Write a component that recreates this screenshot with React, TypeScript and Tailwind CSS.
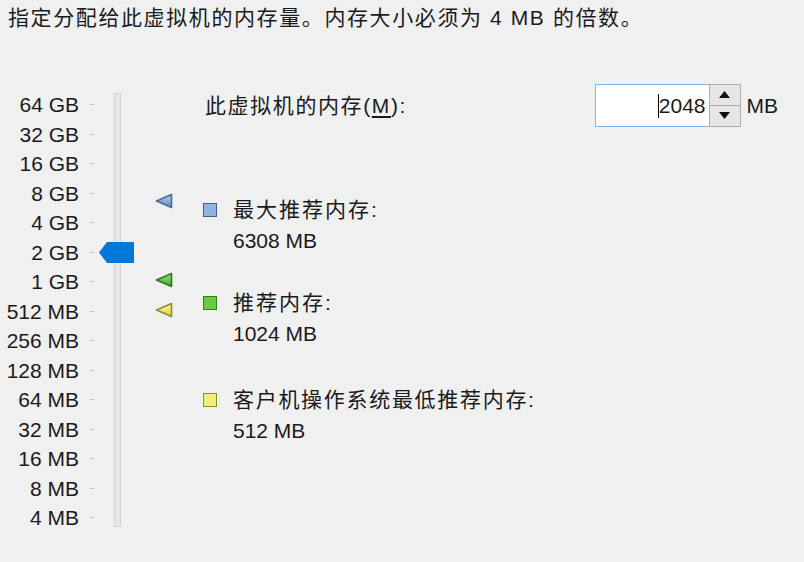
import React from "react";

const scale = [
  "64 GB", "32 GB", "16 GB", "8 GB", "4 GB", "2 GB", "1 GB",
  "512 MB", "256 MB", "128 MB", "64 MB", "32 MB", "16 MB", "8 MB", "4 MB",
];

function Marker({ id, light, dark, stroke, top }: { id: string; light: string; dark: string; stroke: string; top: number }) {
  return (
    <svg className="absolute left-[155px]" style={{ top }} width="18" height="16" viewBox="0 0 18 16">
      <defs>
        <linearGradient id={id} x1="0" y1="0" x2="0" y2="1">
          <stop offset="0" stopColor={light} />
          <stop offset="1" stopColor={dark} />
        </linearGradient>
      </defs>
      <path d="M1.5 8 L16.5 1.5 L16.5 14.5 Z" fill={`url(#${id})`} stroke={stroke} strokeWidth="1.6" strokeLinejoin="round" />
    </svg>
  );
}

function Swatch({ fill, stroke }: { fill: string; stroke: string }) {
  return (
    <span
      className="inline-block w-[14px] h-[14px] border mr-[16px] shrink-0"
      style={{ background: fill, borderColor: stroke }}
    />
  );
}

export default function App() {
  return (
    <div className="w-[804px] h-[562px] bg-[#f0f0f0] text-[#1a1a1a] text-[21px] font-['Tahoma','Liberation_Sans','Noto_Sans_CJK_SC',sans-serif]">
      <div className="h-[36px] pt-[4px] px-[8px] leading-[28px] tracking-[1.6px]">
        指定分配给此虚拟机的内存量。内存大小必须为 4 MB 的倍数。
      </div>

      <div className="flex mt-[48px]">
        {/* slider scale */}
        <div className="relative flex w-[203px] shrink-0">
          <div className="mt-[6px] w-[79px] text-right">
            {scale.map((s) => (
              <div key={s} className="h-[29.5px] leading-[29.5px]">{s}</div>
            ))}
          </div>
          <div className="mt-[6px] ml-[11px]">
            {scale.map((s) => (
              <div key={s} className="h-[29.5px] flex items-center">
                <span className="w-[5px] h-px bg-[#c4c4c4]" />
              </div>
            ))}
          </div>
          <div className="ml-[19px] mt-[9px] w-[7px] h-[434px] bg-[#e7e7e7] border border-[#d4d4d4]" />

          {/* thumb at 2 GB */}
          <svg className="absolute left-[99px] top-[158px]" width="35" height="21" viewBox="0 0 35 21">
            <path d="M0 10.5 L8 0 L35 0 L35 21 L8 21 Z" fill="#0078d7" />
          </svg>

          <Marker id="mb" top={109} light="#b9d0ee" dark="#5f86bd" stroke="#4a6a98" />
          <Marker id="mg" top={188} light="#9be57a" dark="#3aa524" stroke="#2c7a1e" />
          <Marker id="my" top={218} light="#fbf9a8" dark="#dcd63a" stroke="#8f8c30" />
        </div>

        {/* details */}
        <div className="flex-1 pr-[26px]">
          <div className="flex items-center h-[43px]">
            <div className="ml-[2px] tracking-[1.6px]">
              此虚拟机的内存(<span className="underline underline-offset-[3px]">M</span>):
            </div>
            <div className="ml-auto flex items-center">
              <div className="w-[115px] h-[43px] bg-white border border-[#7eb4ea] flex items-center justify-end pr-[3px]">
                <span className="w-px h-[24px] bg-black" />
                <span>2048</span>
              </div>
              <div className="flex flex-col w-[32px] h-[43px] -ml-px">
                <div className="h-[21.5px] bg-[#e6e6e6] border border-[#adadad] flex items-center justify-center">
                  <svg width="11" height="7" viewBox="0 0 11 7"><path d="M0 7 L5.5 0 L11 7 Z" fill="#111" /></svg>
                </div>
                <div className="h-[21.5px] bg-[#e6e6e6] border border-t-0 border-[#adadad] flex items-center justify-center">
                  <svg width="11" height="7" viewBox="0 0 11 7"><path d="M0 0 L5.5 7 L11 0 Z" fill="#111" /></svg>
                </div>
              </div>
              <span className="ml-[6px]">MB</span>
            </div>
          </div>

          <div className="mt-[67px] leading-[31px]">
            <div className="flex items-center tracking-[2px]"><Swatch fill="#93b3dc" stroke="#43608a" />最大推荐内存:</div>
            <div className="pl-[30px]">6308 MB</div>
          </div>
          <div className="mt-[31px] leading-[31px]">
            <div className="flex items-center tracking-[2px]"><Swatch fill="#66cc3c" stroke="#357a22" />推荐内存:</div>
            <div className="pl-[30px]">1024 MB</div>
          </div>
          <div className="mt-[35px] leading-[31px]">
            <div className="flex items-center tracking-[1.7px]"><Swatch fill="#f3f07a" stroke="#8d8a2c" />客户机操作系统最低推荐内存:</div>
            <div className="pl-[30px]">512 MB</div>
          </div>
        </div>
      </div>
    </div>
  );
}
